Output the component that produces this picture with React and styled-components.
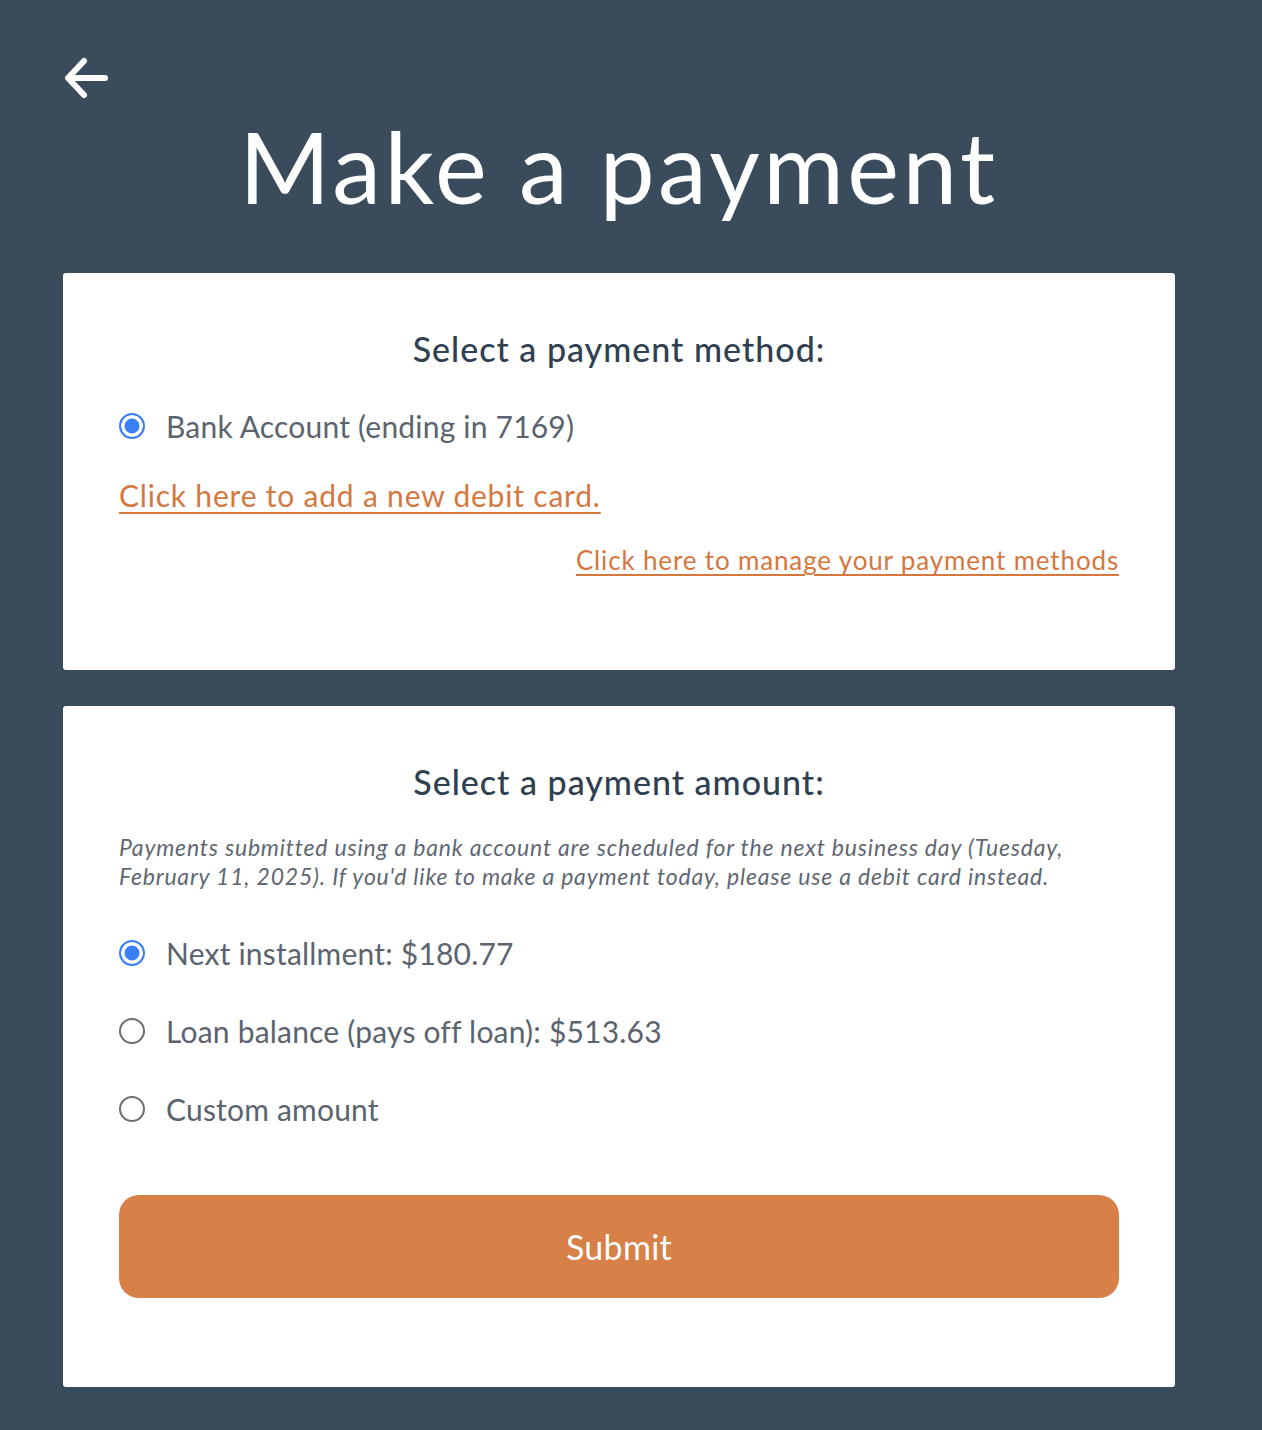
import React, { useState } from 'react';
import styled, { createGlobalStyle } from 'styled-components';

const GlobalStyle = createGlobalStyle`
  html, body {
    margin: 0;
    padding: 0;
    background: #3a4c5c;
  }
  body {
    font-family: Lato, "Open Sans", sans-serif;
  }
`;

const methodOptions = [{ id: 'bank', label: 'Bank Account (ending in 7169)' }];

const amountOptions = [
  { id: 'next', label: 'Next installment: $180.77' },
  { id: 'balance', label: 'Loan balance (pays off loan): $513.63' },
  { id: 'custom', label: 'Custom amount' },
];

const BackArrow = () => (
  <svg width="48" height="46" viewBox="0 0 48 46" fill="none">
    <path
      d="M42 23H7M21 6L5 23L21 40"
      stroke="#fff"
      strokeWidth="6"
      strokeLinecap="round"
      strokeLinejoin="round"
    />
  </svg>
);

const RadioOption = ({ label, checked, onSelect }) => (
  <OptionRow onClick={onSelect}>
    <RadioDot checked={checked} />
    <OptionLabel>{label}</OptionLabel>
  </OptionRow>
);

const App = () => {
  const [method, setMethod] = useState('bank');
  const [amount, setAmount] = useState('next');

  return (
    <Page>
      <GlobalStyle />
      <TopBar>
        <BackButton aria-label="Back">
          <BackArrow />
        </BackButton>
      </TopBar>
      <Title>Make a payment</Title>

      <Card>
        <SectionTitle>Select a payment method:</SectionTitle>
        {methodOptions.map((opt) => (
          <RadioOption
            key={opt.id}
            label={opt.label}
            checked={method === opt.id}
            onSelect={() => setMethod(opt.id)}
          />
        ))}
        <AddCardLink href="#">Click here to add a new debit card.</AddCardLink>
        <ManageRow>
          <ManageLink href="#">Click here to manage your payment methods</ManageLink>
        </ManageRow>
      </Card>

      <Card bottom>
        <SectionTitle>Select a payment amount:</SectionTitle>
        <Note>
          Payments submitted using a bank account are scheduled for the next business day (Tuesday,
          February 11, 2025). If you'd like to make a payment today, please use a debit card instead.
        </Note>
        <OptionList>
          {amountOptions.map((opt) => (
            <RadioOption
              key={opt.id}
              label={opt.label}
              checked={amount === opt.id}
              onSelect={() => setAmount(opt.id)}
            />
          ))}
        </OptionList>
        <SubmitButton type="button">Submit</SubmitButton>
      </Card>
    </Page>
  );
};

const Page = styled.div`
  width: 1262px;
  min-height: 1430px;
  box-sizing: border-box;
  padding: 55px 87px 40px 63px;
  display: flex;
  flex-direction: column;
  background: #3a4c5c;
`;

const TopBar = styled.div`
  display: flex;
  height: 46px;
`;

const BackButton = styled.button`
  background: none;
  border: none;
  padding: 0;
  cursor: pointer;
  display: flex;
`;

const Title = styled.h1`
  margin: 5px 0 47px;
  text-align: center;
  color: #fff;
  font-size: 98px;
  font-weight: 400;
  line-height: 120px;
  letter-spacing: 3.5px;
`;

const Card = styled.section`
  background: #fff;
  border-radius: 3px;
  padding: ${(p) => (p.bottom ? '54px 56px 89px' : '54px 56px 90px')};
  margin-bottom: 36px;
  display: flex;
  flex-direction: column;
`;

const SectionTitle = styled.h2`
  margin: 0 0 33px;
  text-align: center;
  color: #2f4050;
  font-size: 34px;
  font-weight: 500;
  line-height: 44px;
  letter-spacing: 1px;
`;

const OptionList = styled.div`
  display: flex;
  flex-direction: column;
  gap: 34px;
  margin-top: 40px;
`;

const OptionRow = styled.label`
  display: flex;
  align-items: center;
  gap: 21px;
  cursor: pointer;
  height: 44px;
`;

const RadioDot = styled.span`
  width: 26px;
  height: 26px;
  box-sizing: border-box;
  border-radius: 50%;
  flex-shrink: 0;
  border: ${(p) => (p.checked ? '2px solid #3b7ff5' : '2px solid #6b6f73')};
  background: ${(p) => (p.checked ? '#3b7ff5' : '#fff')};
  box-shadow: ${(p) => (p.checked ? 'inset 0 0 0 3.5px #fff' : 'none')};
`;

const OptionLabel = styled.span`
  color: #5b646e;
  font-size: 30px;
  line-height: 44px;
  letter-spacing: 0.2px;
`;

const AddCardLink = styled.a`
  align-self: flex-start;
  margin-top: 25px;
  color: #d5773e;
  font-size: 30px;
  line-height: 44px;
  letter-spacing: 0.8px;
  text-decoration: underline;
  text-underline-offset: 5px;
  text-decoration-thickness: 2px;
`;

const ManageRow = styled.div`
  display: flex;
  justify-content: flex-end;
  margin-top: 23px;
`;

const ManageLink = styled.a`
  color: #d5773e;
  font-size: 26px;
  line-height: 40px;
  letter-spacing: 0.85px;
  text-decoration: underline;
  text-underline-offset: 4px;
`;

const Note = styled.p`
  margin: -4px 0 0;
  color: #5f6872;
  font-size: 23px;
  line-height: 29px;
  font-style: italic;
  letter-spacing: 0.8px;
`;

const SubmitButton = styled.button`
  margin-top: 64px;
  height: 103px;
  border: none;
  border-radius: 20px;
  background: #d78048;
  color: #fff;
  font-family: Lato, "Open Sans", sans-serif;
  font-size: 34px;
  letter-spacing: 0.3px;
  cursor: pointer;
`;

export default App;
